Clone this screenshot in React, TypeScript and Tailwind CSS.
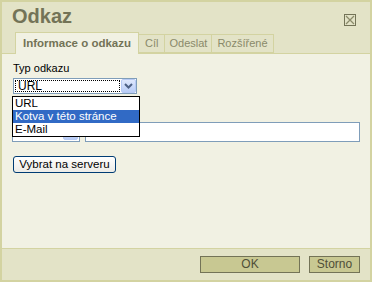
import React from "react";

const font = { fontFamily: '"Liberation Sans", Arial, sans-serif' };

export default function App() {
  return (
    <div
      className="w-[372px] h-[282px] border-2 border-[#d3d3a1] bg-[#e3e3c7] flex flex-col overflow-hidden"
      style={font}
    >
      {/* Header */}
      <div className="h-[51px] flex flex-col shrink-0">
        <div className="flex items-start justify-between pl-[10px] pr-[14px] pt-[3px] h-[30px]">
          <div className="text-[20px] leading-[23px] font-bold text-[#737357]">Odkaz</div>
          <div className="mt-[9px] w-[12px] h-[12px] border border-[#737357] relative">
            <svg width="10" height="10" viewBox="0 0 10 10" className="absolute left-0 top-0">
              <path d="M1 1 L9 9 M9 1 L1 9" stroke="#8a8a6a" strokeWidth="1.2" />
            </svg>
          </div>
        </div>
        <div className="flex items-end pl-[13px] h-[21px] relative z-10">
          <div className="h-[22px] -mb-px px-[7px] bg-[#f1f1e3] border border-b-0 border-[#d3d3a1] text-[11.5px] leading-[20px] font-bold text-[#737357]">
            Informace o odkazu
          </div>
          <div className="h-[19px] px-[6px] bg-[#e3e3c7] border border-l-0 border-[#d3d3a1] text-[11px] leading-[17px] text-[#8a8a6a]">
            Cíl
          </div>
          <div className="h-[19px] px-[4px] bg-[#e3e3c7] border border-l-0 border-[#d3d3a1] text-[11px] leading-[17px] text-[#8a8a6a]">
            Odeslat
          </div>
          <div className="h-[19px] px-[5px] bg-[#e3e3c7] border border-l-0 border-[#d3d3a1] text-[11px] leading-[17px] text-[#8a8a6a]">
            Rozšířené
          </div>
        </div>
      </div>

      {/* Body */}
      <div className="flex-1 bg-[#f1f1e3] border-t border-[#d3d3a1] pl-[10px] pr-[10px] pt-[8px] text-[11px] text-black">
        <div className="leading-[13px] pl-[1px]">Typ odkazu</div>
        <div className="relative mt-[3px] w-[125px]">
          <div className="ml-[1px] w-[124px] h-[16px] border border-[#7f9db9] bg-white flex items-center">
            <div className="ml-[1px] w-[105px] h-[12px] border border-dotted border-black bg-white leading-[10px] pl-[2px] text-[12px]">
              URL
            </div>
            <div className="ml-[1px] w-[15px] h-[14px] rounded-[2px] border border-[#b7caf5] bg-gradient-to-b from-[#dfe8fd] to-[#b9cdf7] flex items-center justify-center">
              <svg width="9" height="6" viewBox="0 0 9 6">
                <path d="M1 1 L4.5 4.5 L8 1" fill="none" stroke="#4d6185" strokeWidth="2" />
              </svg>
            </div>
          </div>
          {/* Dropdown list */}
          <div className="absolute left-0 top-[18px] w-[128px] border border-black bg-white z-20 text-[11.5px] leading-[13px]">
            <div className="pl-[2px] h-[13px]">URL</div>
            <div className="pl-[2px] h-[13px] bg-[#316ac5] text-white">Kotva v této stránce</div>
            <div className="pl-[2px] h-[13px]">E-Mail</div>
          </div>
        </div>

        <div className="h-[13px] mt-[14px]" />
        <div className="flex mt-[1px] gap-[5px]">
          <div className="w-[68px] h-[20px] border border-[#7f9db9] bg-white flex items-center justify-end">
            <div className="w-[15px] h-[16px] mr-[1px] rounded-[2px] border border-[#b7caf5] bg-gradient-to-b from-[#dfe8fd] to-[#b9cdf7]" />
          </div>
          <div className="w-[275px] h-[20px] border border-[#7f9db9] bg-white" />
        </div>

        <button className="mt-[14px] ml-[1px] w-[103px] h-[17px] rounded-[3px] border border-[#003c74] bg-gradient-to-b from-[#ffffff] to-[#ecebe6] text-[11.5px] leading-[15px] text-black flex items-center justify-center">
          Vybrat na serveru
        </button>
      </div>

      {/* Footer */}
      <div className="h-[32px] shrink-0 border-t border-[#d3d3a1] bg-[#e3e3c7] flex items-start justify-end gap-[9px] pr-[10px] pt-[7px]">
        <button className="w-[100px] h-[17px] border border-[#737357] bg-[#c8c892] text-[12px] leading-[15px] text-[#4f4f38]">
          OK
        </button>
        <button className="w-[51px] h-[17px] border border-[#737357] bg-[#c8c892] text-[12px] leading-[15px] text-[#4f4f38]">
          Storno
        </button>
      </div>
    </div>
  );
}
